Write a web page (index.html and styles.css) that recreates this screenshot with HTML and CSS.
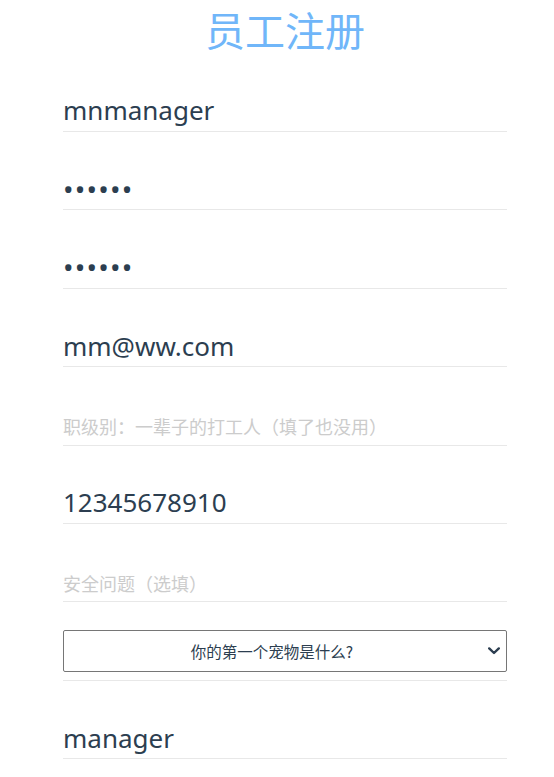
FILE: index.html
```html
<!DOCTYPE html>
<html lang="zh-CN">
<head>
<meta charset="utf-8">
<title>员工注册</title>
<link rel="stylesheet" href="styles.css">
</head>
<body>
<div class="register">
  <h1 class="title">员工注册</h1>
  <form class="form">
    <input class="field" type="text" value="mnmanager">
    <input class="field field-password" type="password" value="123456">
    <input class="field field-password" type="password" value="123456">
    <input class="field" type="text" value="mm@ww.com">
    <input class="field" type="text" placeholder="职级别：一辈子的打工人（填了也没用）">
    <input class="field" type="text" value="12345678910">
    <input class="field" type="text" placeholder="安全问题（选填）">
    <div class="select-row">
      <div class="select-wrap">
        <select class="select">
          <option>你的第一个宠物是什么?</option>
        </select>
        <svg class="chevron" width="12" height="8" viewBox="0 0 12 8" aria-hidden="true">
          <path d="M1.2 1.4 L6 6 L10.8 1.4" fill="none" stroke="#2c3e50" stroke-width="2.4" stroke-linecap="round" stroke-linejoin="round"/>
        </svg>
      </div>
    </div>
    <input class="field" type="text" value="manager">
  </form>
</div>
</body>
</html>
```

FILE: styles.css
```css
html, body {
  margin: 0;
  padding: 0;
  background: #ffffff;
}

body {
  font-family: "Noto Sans", "Noto Sans CJK SC", sans-serif;
  color: #2c3e50;
  overflow: hidden;
}

.register {
  width: 444px;
  margin-left: 63px;
}

.title {
  margin: 0;
  padding-top: 4px;
  height: 49.6px;
  line-height: 50px;
  font-size: 40px;
  font-weight: normal;
  text-align: center;
  color: #70b6f9;
  font-family: "Noto Sans CJK SC", sans-serif;
}

.form {
  display: flex;
  flex-direction: column;
}

.field {
  box-sizing: border-box;
  display: block;
  width: 100%;
  height: 42px;
  margin: 36.4px 0 0;
  padding: 0;
  border: none;
  border-bottom: 1px solid #e8e8e8;
  outline: none;
  background: transparent;
  font-family: "Noto Sans", "Noto Sans CJK SC", sans-serif;
  font-size: 26px;
  color: #2c3e50;
}

.field-password {
  font-size: 28px;
  letter-spacing: 1.2px;
}

.field::placeholder {
  font-family: "Noto Sans CJK SC", sans-serif;
  font-size: 18px;
  letter-spacing: 0;
  color: #cccccc;
}

.select-row {
  margin-top: 28px;
  padding-bottom: 8px;
  border-bottom: 1px solid #e8e8e8;
}

.select-wrap {
  position: relative;
}

.select {
  box-sizing: border-box;
  display: block;
  width: 100%;
  height: 42px;
  padding: 0 28px 0 2px;
  border: 1px solid #767676;
  border-radius: 2px;
  background: #ffffff;
  color: #2c3e50;
  font-family: "Noto Sans CJK SC", sans-serif;
  font-size: 15.5px;
  text-align: center;
  text-align-last: center;
  appearance: none;
  -webkit-appearance: none;
  outline: none;
}

.chevron {
  position: absolute;
  right: 7px;
  top: 17px;
  pointer-events: none;
}

.select-row + .field {
  margin-top: 36px;
}
```
